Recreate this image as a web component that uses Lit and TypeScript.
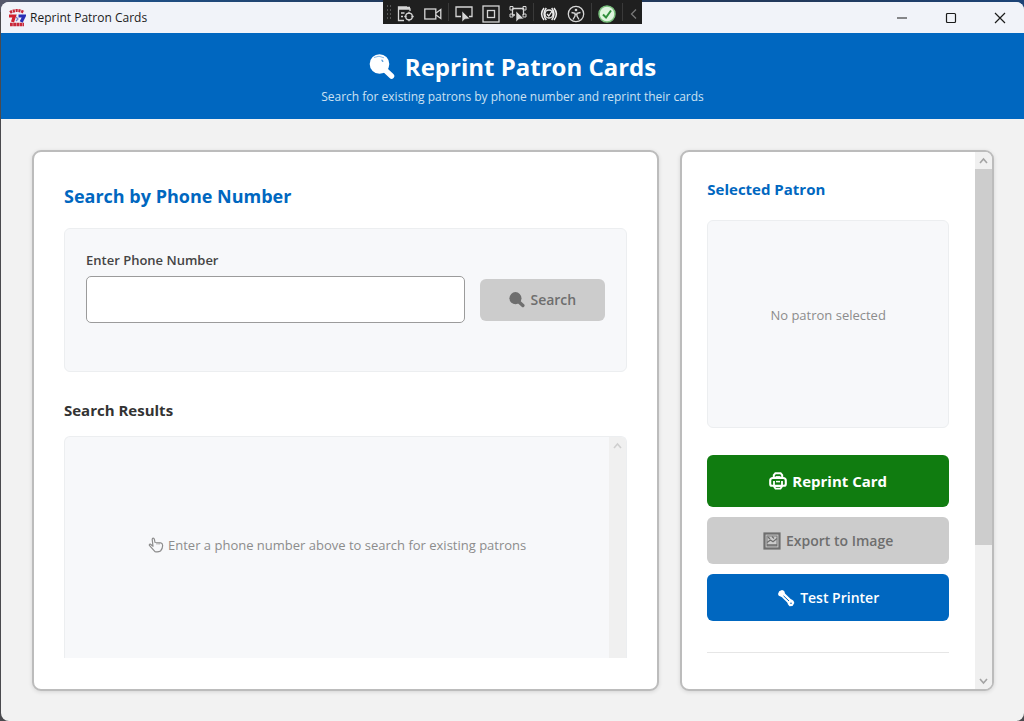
import { LitElement, html, css, svg } from "lit";
import { customElement, state } from "lit/decorators.js";

const magnifier = html`<svg class="glyph" viewBox="0 0 26 26" aria-hidden="true">
  <path d="M15 15 L22.500 22" stroke="currentColor" stroke-width="5.500" stroke-linecap="round" />
  <circle cx="10.500" cy="10" r="9.800" fill="currentColor" />
  <path d="M5 3.500 Q10 .8 15 3.800" fill="none" stroke="var(--glint, transparent)" stroke-width=".8" />
  <path d="M12.500 6 Q13.800 6.500 13.800 8" fill="none" stroke="var(--glint, transparent)" stroke-width="1.400" />
</svg>`;

const printer = html`<svg class="glyph" viewBox="0 0 18 18" aria-hidden="true" fill="none" stroke="currentColor">
  <path d="M4.800 6 V3.200 L6.400 1.200 H11.600 L13.200 3.200 V6" stroke-width="2" />
  <path d="M6.500 4.600 H11.500" stroke-width="1" />
  <path d="M4 6 H14 Q16.800 6 16.800 8.500 V12 Q16.800 13.800 15 13.800 H3 Q1.200 13.800 1.200 12 V8.500 Q1.200 6 4 6 Z" stroke-width="2.100" />
  <path d="M5 9 V14.500 L6.500 16.600 H11.500 L13 14.500 V9" stroke-width="1.800" />
  <path d="M7 9.600 H11" stroke-width="1.500" />
  <path d="M5.500 14 H12.500" stroke-width="2" />
</svg>`;

const picture = html`<svg class="glyph" viewBox="0 0 18 18" aria-hidden="true" fill="none" stroke="currentColor">
  <rect x="1.500" y="1.500" width="15" height="15" stroke-width="2.200" />
  <rect x="4" y="4" width="10" height="10" stroke-width=".9" />
  <path d="M4 10.500 L7.500 8 L10 9.800 L14 6.500 M4 13 H14 M5 5 L7 7 M9 4.500 L11 6.500" stroke-width="1.300" />
</svg>`;

const wrench = html`<svg class="glyph" viewBox="0 0 18 18" aria-hidden="true">
  <path d="M4.500 4.500 L13.500 13.200" stroke="currentColor" stroke-width="4.800" />
  <path d="M1 5 L2.200 2.200 L5 1 Q8.200 1.500 7.800 5 Q6.800 8.200 3.600 7.600 Q1.200 7 1 5 Z" fill="currentColor" />
  <path d="M10.500 12.500 L13.500 10.200 Q17 11 17.300 14 L15.500 17 L12.500 17.300 Q10 15.500 10.500 12.500 Z" fill="currentColor" />
  <path d="M6.500 6.800 L12 12" stroke="#0067c0" stroke-width="1" />
  <circle cx="14" cy="14.200" r=".8" fill="#0067c0" />
</svg>`;

const hand = html`<svg class="glyph" viewBox="0 0 16 16" aria-hidden="true" fill="none" stroke="currentColor" stroke-width="1.200" stroke-linejoin="round" stroke-linecap="round">
  <path d="M5 9.200 L4.200 2.400 Q4.200 1.200 5.200 1.200 Q6.100 1.200 6.400 2.400 L7 5.500 L12.800 5.800 Q14.500 6.200 14.600 8.200 Q14.800 11.500 12.500 14 Q10 15.400 7 14.600 L1.600 8.700 Q.8 7.400 2.200 7.100 L5 9.200" />
  <path d="M9 5.800 V7.200 M11 5.900 V7.300" stroke-width=".8" />
</svg>`;

const cursor = svg`<path d="M7 6 L7 17 L10 14.200 L15 13.800 Z" fill="#d6d6d6" stroke="#1f1f1f" stroke-width=".6" />`;

const tools = {
  tree: svg`<path d="M10 2 H1.500 V15.500 H7 M1.500 2.500 H13 M1.500 4 H13 V6 M4 8 H7.500 M4 11.500 H6" /><circle cx="12" cy="11.500" r="3.300" /><path d="M12 6.800 V9 M12 14 V16.200 M7.300 11.500 H9.500 M14.500 11.500 H16.700" />`,
  camera: svg`<rect x=".8" y="4" width="11" height="10" /><path d="M12 8 L16.800 4.500 V13.500 L12 10" />`,
  pick: svg`<path d="M6 11.500 H1 V2 H17 V11.500 H14" />${cursor}`,
  box: svg`<rect x="1" y="1" width="16" height="16" /><rect x="5.500" y="5.500" width="7" height="7" />`,
  bounds: svg`<path d="M3.500 3.500 H14.500 V10 M3.500 3.500 V10 H6" /><path d="M1 1.500 H4 V5 H1 Z M14 1.500 H17 V5 H14 Z M1 9 H4 V12 H1 Z M14 9 H17 V12 H14 Z" stroke-width="1" />${cursor}`,
  reload: svg`<path d="M4 3 Q-.8 9 4 15 M6.300 3 Q1.800 9 6.300 15 M11.700 3 Q16.200 9 11.700 15 M14 3 Q18.800 9 14 15" stroke-width="1.500" stroke="#eee" /><circle cx="9" cy="9" r="4" stroke="#eee" /><path d="M7 9 L8.800 11 L12.500 5.500" stroke="#eee" />`,
  access: svg`<circle cx="9" cy="9" r="7.700" /><circle cx="9" cy="5" r="1.300" fill="#d6d6d6" stroke="none" /><path d="M4.500 7.500 L8 8.300 V11 L6 14.500 M13.500 7.500 L10 8.300 V11 L12 14.500 M8 9.500 H10" />`,
  status: svg`<circle cx="9" cy="9" r="8" fill="#dff5df" stroke="#79c07d" stroke-width="1.500" /><path d="M5 9.500 L8 12.500 L13 5.500" stroke="#2f8f3c" stroke-width="2" />`,
  collapse: svg`<path d="M11 4.500 L6.500 9 L11 13.500" stroke="#777" />`,
};

@customElement("app-root")
export class AppRoot extends LitElement {
  @state() private phone = "";

  static styles = css`
    :host {
      display: block;
      height: 100vh;
      box-sizing: border-box;
      padding: 2px 0 0 1px;
      background: linear-gradient(90deg, #55586a 0, #1f4f86 140px, #22395c 400px, #22395c 800px, #1c4377 100%) 0 0 / 100% 12px no-repeat, #4a4a4e;
      font-family: "Open Sans", "Noto Sans", sans-serif;
      color: #333;
    }
    * { box-sizing: border-box; }
    button, input { font: inherit; margin: 0; }
    h1, h2, h3, p { margin: 0; }
    .window {
      display: flex;
      flex-direction: column;
      height: 100%;
      border-radius: 8px;
      overflow: hidden;
      background: #f2f2f2;
    }
    .titlebar {
      flex: none;
      display: flex;
      align-items: center;
      height: 31px;
      padding-left: 7px;
      gap: 4px;
      background: #f1f3f9;
      font-size: 12px;
      color: #1b1b1b;
    }
    .logo { width: 18px; height: 18px; }
    .caption { flex: 1; }
    .controls { display: flex; height: 100%; }
    .control {
      width: 49px;
      border: 0;
      padding: 0;
      background: none;
      display: grid;
      place-items: center;
    }
    .control svg { width: 12px; height: 12px; fill: none; stroke: #1b1b1b; stroke-width: 1.200; }
    .toolbar {
      position: absolute;
      top: 0;
      left: 50%;
      margin-left: -129px;
      height: 24px;
      padding: 0 1px 0 3px;
      display: flex;
      align-items: center;
      gap: 1px;
      background: #1f1f1f;
    }
    .grip {
      width: 6px;
      height: 16px;
      background: radial-gradient(#555 1px, transparent 1px) 0 0 / 3px 4px;
    }
    .tool { width: 26px; height: 24px; padding: 3px 0 0; border: 0; background: none; display: grid; place-items: center; }
    .tool.slim { width: 16px; }
    .tool svg { width: 18px; height: 18px; fill: none; stroke: #d6d6d6; stroke-width: 1.300; }
    .sep { width: 1px; height: 18px; margin: 0 1px; background: #3a3a3a; }
    .banner {
      flex: none;
      height: 86px;
      display: flex;
      flex-direction: column;
      align-items: center;
      padding-top: 16px;
      background: #0067c0;
      color: #fff;
    }
    .banner h1 {
      display: flex;
      align-items: center;
      gap: 10px;
      font-size: 24px;
      line-height: 36px;
      font-weight: 700;
      --glint: #6aa5dc;
    }
    .banner h1 .glyph { width: 26px; height: 26px; }
    .banner p { font-size: 12px; line-height: 24px; color: #cce1f2; }
    .main {
      flex: 1;
      min-height: 0;
      display: grid;
      grid-template-columns: 2fr 1fr;
      gap: 21px;
      padding: 31px 30px 30px 31px;
    }
    .card {
      min-width: 0;
      min-height: 0;
      background: #fff;
      border: 2px solid #bcbcbc;
      border-radius: 9px;
      box-shadow: 0 1px 4px rgba(0, 0, 0, 0.12);
      overflow: hidden;
    }
    .search {
      display: flex;
      flex-direction: column;
      padding: 30px 30px 31px;
    }
    .search h2 { font-size: 18px; line-height: 28px; font-weight: 700; color: #0067c0; }
    .panel {
      background: #f7f8fa;
      border: 1px solid #eceef0;
      border-radius: 6px;
    }
    .form {
      display: grid;
      grid-template-columns: 1fr 125px;
      column-gap: 15px;
      align-items: center;
      margin-top: 18px;
      padding: 20px 21px 48px;
    }
    .form label {
      grid-column: 1 / -1;
      font-size: 13px;
      line-height: 22px;
      padding-bottom: 5px;
      font-weight: 600;
      color: #444;
    }
    .form input {
      width: 100%;
      min-width: 0;
      height: 47px;
      border: 1px solid #9b9b9b;
      border-radius: 5px;
      padding: 0 12px;
      background: #fff;
      font-size: 16px;
      outline: none;
    }
    .btn {
      display: flex;
      align-items: center;
      justify-content: center;
      gap: 5px;
      width: 100%;
      height: 47px;
      padding: 0;
      border: 0;
      border-radius: 6px;
      font-size: 14px;
      font-weight: 600;
      color: #fff;
      background: #0067c0;
    }
    .btn .glyph { width: 18px; height: 18px; }
    .btn:disabled { background: #ccc; color: #6e6e6e; }
    .btn.find { height: 42px; }
    .btn.find .glyph { width: 16px; height: 16px; }
    .btn.print { height: 52px; background: #107c10; font-size: 15px; font-weight: 700; }
    .search h3 { margin-top: 25px; font-size: 15px; line-height: 26px; font-weight: 700; color: #333; }
    .results {
      flex: 1;
      min-height: 0;
      display: flex;
      margin-top: 13px;
      border-bottom: 0;
      border-radius: 6px 6px 0 0;
      overflow: hidden;
    }
    .hint {
      flex: 1;
      display: flex;
      align-items: center;
      justify-content: center;
      gap: 4px;
      padding-bottom: 5px;
      font-size: 13px;
      color: #8c8c8c;
    }
    .hint .glyph { width: 16px; height: 16px; }
    .bar {
      flex: none;
      width: 17px;
      display: flex;
      flex-direction: column;
      background: #f0f0f0;
    }
    .bar svg { flex: none; width: 17px; height: 17px; fill: none; stroke: #a3a3a3; stroke-width: 1.600; }
    .bar.idle svg { stroke: #cfcfcf; }
    .thumb { flex: 376; background: #cdcdcd; }
    .rest { flex: 127; }
    .side { display: flex; }
    .content {
      flex: 1;
      min-width: 0;
      padding: 24px 26px 0 25px;
      display: flex;
      flex-direction: column;
      overflow: hidden;
    }
    .content h2 { font-size: 15px; line-height: 26px; font-weight: 700; color: #0067c0; }
    .empty {
      flex: none;
      height: 208px;
      margin-top: 18px;
      padding-bottom: 18px;
      display: grid;
      place-items: center;
      font-size: 13px;
      color: #8c8c8c;
    }
    .actions {
      display: flex;
      flex-direction: column;
      gap: 10px;
      margin-top: 27px;
      padding-bottom: 31px;
      border-bottom: 1px solid #e6e6e6;
    }
  `;

  private tool(name: keyof typeof tools, label: string, slim = false) {
    return html`<button class="tool ${slim ? "slim" : ""}" aria-label=${label}><svg viewBox="0 0 18 18">${tools[name]}</svg></button>`;
  }

  private arrow(up: boolean) {
    return html`<svg viewBox="0 0 17 17" aria-hidden="true"><path d=${up ? "M5 11 L8.500 7 L12 11" : "M5 7 L8.500 11 L12 7"} /></svg>`;
  }

  render() {
    return html`
      <div class="window">
        <header class="titlebar">
          <svg class="logo" viewBox="0 0 18 18" aria-hidden="true" fill="none">
            <path d="M2 3.500 Q9 -.5 16 3.500" stroke="#c8283a" stroke-width="3" stroke-dasharray="2.200 .7" />
            <path d="M1 7 H6.500 L4.500 13" stroke="#d0202f" stroke-width="3.200" />
            <path d="M10.500 7 H16.200 L13.200 13" stroke="#2a2fb5" stroke-width="3.200" />
            <path d="M8 8 L10 10 L8 12" stroke="#7a7fc8" stroke-width="1.200" />
            <path d="M2 15.500 H16" stroke="#c8283a" stroke-width="3.600" stroke-dasharray="2.800 .4" />
          </svg>
          <span class="caption">Reprint Patron Cards</span>
          <div class="controls">
            <button class="control" aria-label="Minimize"><svg viewBox="0 0 12 12"><path d="M1 6 H11" /></svg></button>
            <button class="control" aria-label="Maximize"><svg viewBox="0 0 12 12"><rect x="1.500" y="1.500" width="9" height="9" rx="1" /></svg></button>
            <button class="control" aria-label="Close"><svg viewBox="0 0 12 12"><path d="M1 1 L11 11 M11 1 L1 11" /></svg></button>
          </div>
        </header>

        <section class="banner">
          <h1>${magnifier}<span>Reprint Patron Cards</span></h1>
          <p>Search for existing patrons by phone number and reprint their cards</p>
        </section>

        <main class="main">
          <section class="card search">
            <h2>Search by Phone Number</h2>
            <div class="panel form">
              <label for="phone">Enter Phone Number</label>
              <input id="phone" type="tel" .value=${this.phone} @input=${(e: Event) => (this.phone = (e.target as HTMLInputElement).value)} />
              <button class="btn find" ?disabled=${!this.phone}>${magnifier}<span>Search</span></button>
            </div>
            <h3>Search Results</h3>
            <div class="panel results">
              <p class="hint">${hand}<span>Enter a phone number above to search for existing patrons</span></p>
              <div class="bar idle">${this.arrow(true)}</div>
            </div>
          </section>

          <section class="card side">
            <div class="content">
              <h2>Selected Patron</h2>
              <div class="panel empty">No patron selected</div>
              <div class="actions">
                <button class="btn print">${printer}<span>Reprint Card</span></button>
                <button class="btn" disabled>${picture}<span>Export to Image</span></button>
                <button class="btn">${wrench}<span>Test Printer</span></button>
              </div>
            </div>
            <div class="bar">${this.arrow(true)}<div class="thumb"></div><div class="rest"></div>${this.arrow(false)}</div>
          </section>
        </main>
      </div>

      <div class="toolbar" role="toolbar" aria-label="Debug tools">
        <span class="grip"></span>
        ${this.tool("tree", "Live visual tree")}${this.tool("camera", "Record")}
        <span class="sep"></span>
        ${this.tool("pick", "Select element")}${this.tool("box", "Show layout adorners")}${this.tool("bounds", "Track focused element")}
        <span class="sep"></span>
        ${this.tool("reload", "Binding failures")}${this.tool("access", "Accessibility checker")}
        <span class="sep"></span>
        ${this.tool("status", "Hot reload")}
        <span class="sep"></span>
        ${this.tool("collapse", "Collapse", true)}
      </div>
    `;
  }
}
